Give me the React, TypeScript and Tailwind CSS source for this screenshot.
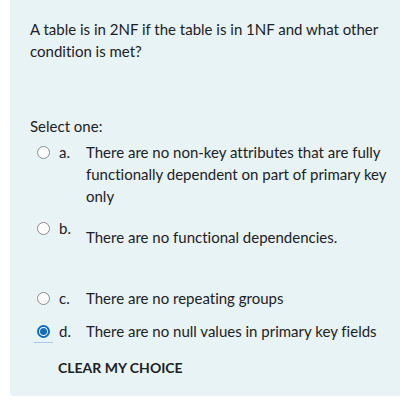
export default function App() {
  const font = { fontFamily: 'Lato, "Open Sans", sans-serif' };
  return (
    <div className="w-[400px] h-[404px] bg-white" style={font}>
      <div className="ml-[10px] h-[396px] bg-[#e7f3f5] rounded-bl-[4px] pl-[20px] pt-[18px] text-[15px] leading-[22px] text-[#1d2125] [font-variant-ligatures:none]">
        <div className="w-[360px]">
          A table is in 2NF if the table is in 1NF and what other condition is met?
        </div>
        <div className="mt-[53px]">Select one:</div>
        <div className="mt-[4px] flex flex-col">
          {/* a */}
          <div className="flex items-start pl-[7px]">
            <span className="mt-[5px] w-[13px] h-[13px] rounded-full border border-[#8a8a8a] bg-white shrink-0"></span>
            <span className="ml-[9px] w-[27px]">a.</span>
            <span className="w-[312px]">
              There are no non-key attributes that are fully functionally dependent on part of primary key only
            </span>
          </div>
          {/* b */}
          <div className="flex items-start pl-[7px] mt-[10px]">
            <span className="mt-[5px] w-[13px] h-[13px] rounded-full border border-[#8a8a8a] bg-white shrink-0"></span>
            <span className="ml-[9px] w-[27px]">b.</span>
            <span className="pt-[9px]">There are no functional dependencies.</span>
          </div>
          {/* c */}
          <div className="flex items-start pl-[7px] mt-[39px]">
            <span className="mt-[5px] w-[13px] h-[13px] rounded-full border border-[#8a8a8a] bg-white shrink-0"></span>
            <span className="ml-[9px] w-[27px]">c.</span>
            <span>There are no repeating groups</span>
          </div>
          {/* d */}
          <div className="flex items-start pl-[7px] mt-[11px]">
            <span className="relative mt-[5px] w-[13px] h-[13px] shrink-0">
              <span className="absolute inset-0 rounded-full border-[2px] border-[#0f6cbf] bg-white flex items-center justify-center">
                <span className="w-[7px] h-[7px] rounded-full bg-[#0f6cbf]"></span>
              </span>
              <span className="absolute left-[-3px] top-[17px] w-[19px] h-px bg-[#a8cbe8]"></span>
            </span>
            <span className="ml-[9px] w-[27px]">d.</span>
            <span>There are no null values in primary key fields</span>
          </div>
        </div>
        <div className="mt-[15px] ml-[28px] text-[14px] font-bold uppercase text-[#1d2125]">
          Clear my choice
        </div>
      </div>
    </div>
  );
}
